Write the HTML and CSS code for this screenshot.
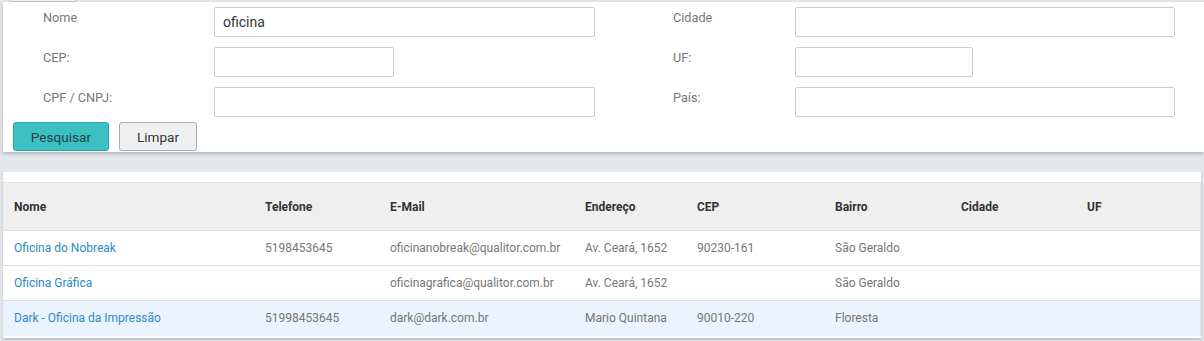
FILE: index.html
```html
<!DOCTYPE html>
<html lang="pt-BR">
<head>
<meta charset="utf-8">
<title>Pesquisa</title>
<link rel="stylesheet" href="styles.css">
</head>
<body>
<div class="top-strip"><span class="tab"></span></div>
<section class="filter-panel">
  <div class="form-grid">
    <label class="lbl">Nome</label>
    <input class="inp wide" type="text" value="oficina">
    <label class="lbl lbl-r">Cidade</label>
    <input class="inp wide" type="text">

    <label class="lbl">CEP:</label>
    <div><input class="inp short" type="text"></div>
    <label class="lbl lbl-r">UF:</label>
    <div><input class="inp short2" type="text"></div>

    <label class="lbl">CPF / CNPJ:</label>
    <input class="inp wide" type="text">
    <label class="lbl lbl-r">País:</label>
    <input class="inp wide" type="text">
  </div>
  <div class="actions">
    <button class="btn btn-primary">Pesquisar</button>
    <button class="btn btn-default">Limpar</button>
  </div>
</section>

<section class="results">
  <table class="grid">
    <thead>
      <tr>
        <th class="c1">Nome</th>
        <th class="c2">Telefone</th>
        <th class="c3">E-Mail</th>
        <th class="c4">Endereço</th>
        <th class="c5">CEP</th>
        <th class="c6">Bairro</th>
        <th class="c7">Cidade</th>
        <th>UF</th>
      </tr>
    </thead>
    <tbody>
      <tr>
        <td><a href="#">Oficina do Nobreak</a></td>
        <td>5198453645</td>
        <td>oficinanobreak@qualitor.com.br</td>
        <td>Av. Ceará, 1652</td>
        <td>90230-161</td>
        <td>São Geraldo</td>
        <td></td>
        <td></td>
      </tr>
      <tr>
        <td><a href="#">Oficina Gráfica</a></td>
        <td></td>
        <td>oficinagrafica@qualitor.com.br</td>
        <td>Av. Ceará, 1652</td>
        <td></td>
        <td>São Geraldo</td>
        <td></td>
        <td></td>
      </tr>
      <tr class="hover">
        <td><a href="#">Dark - Oficina da Impressão</a></td>
        <td>51998453645</td>
        <td>dark@dark.com.br</td>
        <td>Mario Quintana</td>
        <td>90010-220</td>
        <td>Floresta</td>
        <td></td>
        <td></td>
      </tr>
    </tbody>
  </table>
</section>
</body>
</html>
```
FILE: styles.css
```css
* { box-sizing: border-box; }
html, body { margin: 0; padding: 0; }
body {
  background: #e4e8eb;
  font-family: Roboto, "Liberation Sans", Arial, sans-serif;
  font-size: 13px;
  color: #777;
  width: 1204px;
  height: 341px;
  overflow: hidden;
}

.top-strip {
  height: 2px;
  padding-left: 8px;
  overflow: hidden;
}
.tab {
  display: block;
  width: 70px;
  height: 6px;
  margin-top: -4px;
  border: 1px solid #bfc4c8;
  border-radius: 0 0 4px 4px;
  background: #f3f3f3;
}

.filter-panel {
  margin-left: 3px;
  background: #fff;
  height: 150px;
  padding: 5px 0 0 0;
  box-shadow: 0 2px 4px rgba(0, 0, 0, 0.22);
  position: relative;
  z-index: 1;
}

.form-grid {
  display: grid;
  grid-template-columns: 171px 381px 200px 380px;
  grid-auto-rows: 30px;
  row-gap: 10px;
  padding-left: 40px;
}
.lbl-r { margin-left: 78px; }

.lbl {
  padding-top: 3px;
  line-height: 15px;
  color: #777;
  font-size: 12.7px;
}

.inp {
  display: block;
  height: 30px;
  border: 1px solid #ccc;
  border-radius: 2px;
  padding: 0 8px;
  font-family: Roboto, "Liberation Sans", Arial, sans-serif;
  font-size: 14px;
  color: #333;
  background: #fff;
  outline: none;
}
.wide { width: 381px; }
.form-grid > .wide:nth-child(4n) { width: 380px; }
.short { width: 180px; }
.short2 { width: 178px; }

.actions {
  display: flex;
  gap: 10px;
  padding-left: 10px;
  margin-top: 5px;
}
.btn {
  height: 29px;
  border-radius: 3px;
  font-family: Roboto, "Liberation Sans", Arial, sans-serif;
  font-size: 13.6px;
  padding: 0;
  cursor: pointer;
}
.btn-primary {
  width: 96px;
  background: #3cc0c2;
  border: 1px solid #2ea6a8;
  color: #24424a;
}
.btn-default {
  width: 78px;
  background: #f0f0f0;
  border: 1px solid #9fb0bd;
  color: #333;
}

.results {
  margin: 20px 3px 0 3px;
  background: #fff;
  padding: 10px 0 2px 0;
  box-shadow: 0 2px 3px rgba(0, 0, 0, 0.18);
  width: 1198px;
}

.grid {
  width: 100%;
  border-collapse: collapse;
  table-layout: fixed;
  font-size: 12px;
}
.grid th, .grid td {
  text-align: left;
  padding: 0 0 0 11px;
  white-space: nowrap;
  overflow: hidden;
}
.grid thead tr {
  height: 48px;
  background: #efefef;
  border-top: 1px solid #e2e2e2;
}
.grid th {
  font-weight: bold;
  color: #333;
  font-size: 12px;
}
.grid th:last-child { border-right: 1px solid #e2e2e2; }
.grid tbody tr {
  height: 35px;
  border-top: 1px solid #e0e0e0;
}
.grid td:last-child { border-right: 1px solid #e2e2e2; }
.grid tr.hover { background: #ebf3fe; }
.grid td { color: #777; font-size: 12px; }
.grid a { color: #2b8ac8; text-decoration: none; }

.c1 { width: 251px; }
.c2 { width: 125px; }
.c3 { width: 195px; }
.c4 { width: 112px; }
.c5 { width: 138px; }
.c6 { width: 126px; }
.c7 { width: 126px; }
```
